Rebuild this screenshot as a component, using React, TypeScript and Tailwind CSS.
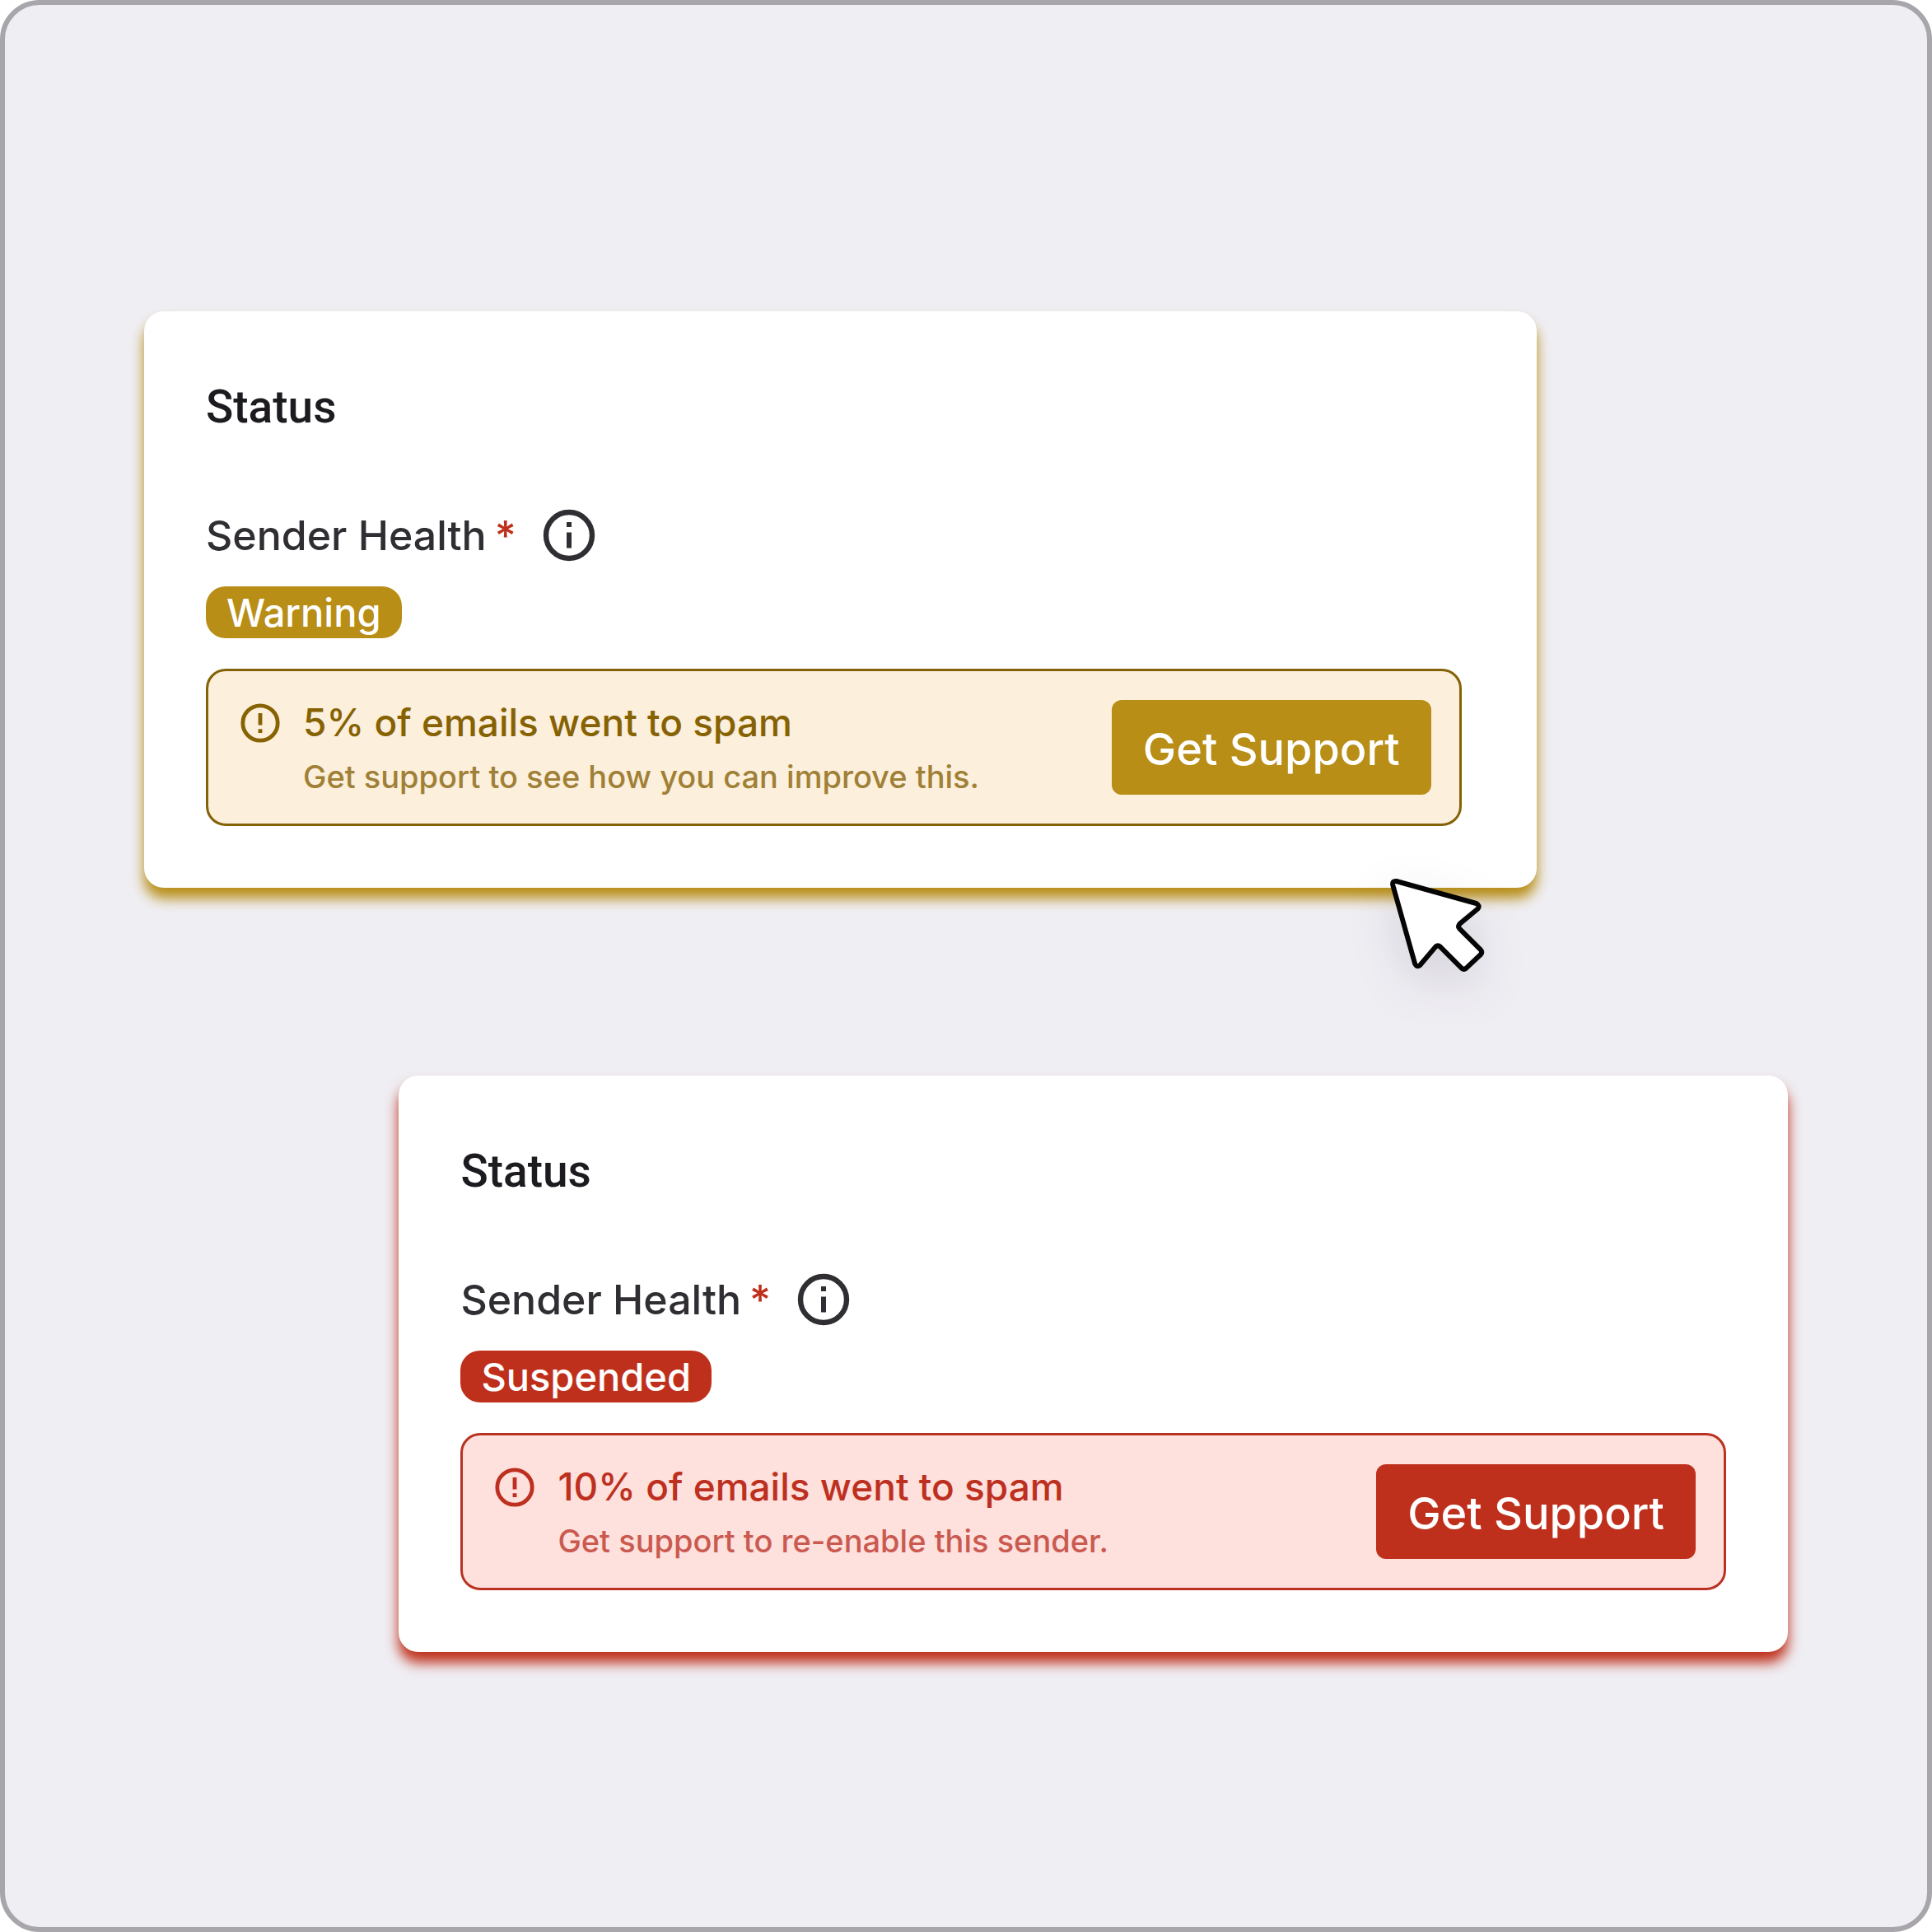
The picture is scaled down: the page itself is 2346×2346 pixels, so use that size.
import { clsx } from "clsx";

type Tone = "warning" | "suspended";

type Sender = {
  tone: Tone;
  badge: string;
  title: string;
  hint: string;
};

const SENDERS: Sender[] = [
  {
    tone: "warning",
    badge: "Warning",
    title: "5% of emails went to spam",
    hint: "Get support to see how you can improve this.",
  },
  {
    tone: "suspended",
    badge: "Suspended",
    title: "10% of emails went to spam",
    hint: "Get support to re-enable this sender.",
  },
];

const TONES = {
  warning: {
    card: "w-[84.7%] self-start pr-[91px] shadow-[0_13px_16px_#b88e17]",
    fill: "bg-[#b88e17]",
    alert: "border-[#846207] bg-[#fcefdc] text-[#866203]",
    hint: "text-[#a08036]",
  },
  suspended: {
    card: "w-[84.5%] self-end pr-[75px] shadow-[0_13px_16px_#bf301c]",
    fill: "bg-[#bf301c]",
    alert: "border-[#b93222] bg-[#fee0dd] text-[#bd3020]",
    hint: "text-[#ca5a50]",
  },
};

function InfoIcon() {
  return (
    <svg viewBox="0 0 64 64" className="size-16" fill="none" aria-hidden="true">
      <circle cx="32" cy="32" r="28" stroke="currentColor" strokeWidth="6.4" />
      <path d="M29 16h6v6h-6zM29 28.5h6v19h-6z" fill="currentColor" />
    </svg>
  );
}

function AlertIcon() {
  return (
    <svg viewBox="0 0 48 48" className="size-12 shrink-0" fill="none" aria-hidden="true">
      <circle cx="24" cy="24" r="21.2" stroke="currentColor" strokeWidth="4.8" />
      <path d="M21.6 12h4.8v14.4h-4.8zM21.6 31.2h4.8V36h-4.8z" fill="currentColor" />
    </svg>
  );
}

function Cursor() {
  return (
    <svg
      viewBox="0 0 120 120"
      className="absolute -bottom-[111px] right-[57px] size-[120px] overflow-visible drop-shadow-[0_20px_28px_rgba(50,30,60,0.13)]"
      aria-hidden="true"
    >
      <path
        d="M6.5 1 103.5 28Q108.5 30.5 105.5 34.5L83.4 52.9Q80.8 55.8 83.2 58.6L109 84.4Q111.4 87.2 109 90L91.4 106.6Q88.6 109 85.8 106.6L59.8 80.6Q57 78.2 54.2 80.6L35.5 102.8Q31.5 106 29.2 101.5L2.2 5.5Q1.4 .4 6.5 1Z"
        fill="#fff"
        stroke="#050505"
        strokeWidth="6"
        strokeLinejoin="round"
      />
    </svg>
  );
}

function StatusCard({ sender }: { sender: Sender }) {
  const tone = TONES[sender.tone];

  return (
    <section
      className={clsx(
        "relative flex flex-col items-start rounded-3xl bg-white py-[75px] pl-[75px]",
        tone.card,
      )}
    >
      <h2 className="font-['Roboto',sans-serif] text-[55px] leading-[82px] font-medium text-[#1d1b20]">
        Status
      </h2>
      <div className="mt-[83px] flex items-center text-[#302e33]">
        <span className="text-[50px] leading-[64px] font-medium">Sender Health</span>
        <span className="ml-[10px] text-[50px] leading-[64px] font-medium text-[#bf301c]">*</span>
        <button type="button" aria-label="About sender health" className="ml-8">
          <InfoIcon />
        </button>
      </div>
      <span
        className={clsx(
          "mt-[30px] rounded-3xl px-[25px] text-[47px] leading-[63px] font-medium text-white",
          tone.fill,
        )}
      >
        {sender.badge}
      </span>
      <div
        className={clsx(
          "mt-[37px] flex w-full items-center justify-between rounded-3xl border-3 py-[35px] pr-[34px] pl-[39px]",
          tone.alert,
        )}
      >
        <div className="-my-3 flex items-start gap-7">
          <div className="flex h-[60px] items-center">
            <AlertIcon />
          </div>
          <div>
            <p className="text-[46px] leading-[58px] font-medium">{sender.title}</p>
            <p className={clsx("mt-3 text-[38px] leading-[50px] font-medium", tone.hint)}>
              {sender.hint}
            </p>
          </div>
        </div>
        <button
          type="button"
          className={clsx(
            "h-[115px] rounded-xl px-[38px] pt-1 text-[54px] font-medium text-white",
            tone.fill,
          )}
        >
          Get Support
        </button>
      </div>
      {sender.tone === "warning" ? <Cursor /> : null}
    </section>
  );
}

export default function App() {
  return (
    <div className="bg-white font-['Inter',sans-serif]">
      <main className="flex min-h-screen flex-col gap-[228px] rounded-[48px] border-6 border-[#a8a6aa] bg-[#efeef3] px-[169px] pt-[372px] pb-20">
        {SENDERS.map((s) => (
          <StatusCard key={s.tone} sender={s} />
        ))}
      </main>
    </div>
  );
}
